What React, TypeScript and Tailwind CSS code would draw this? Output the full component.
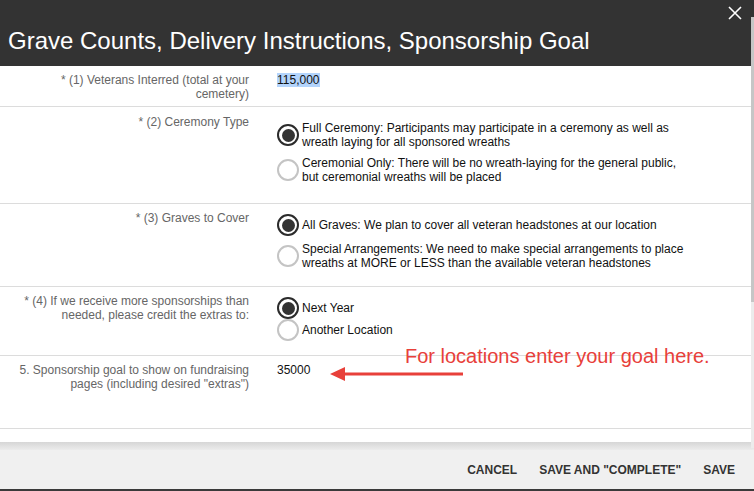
import React from "react";

type Option = { label: string[]; checked: boolean };

type Row = {
  label: string[];
  kind: "text" | "radio";
  value?: string;
  highlight?: boolean;
  options?: Option[];
  rowClass: string;
  optClass?: string;
};

const ROWS: Row[] = [
  {
    label: ["* (1) Veterans Interred (total at your", "cemetery)"],
    kind: "text",
    value: "115,000",
    highlight: true,
    rowClass: "h-[41px] pt-[7px]",
  },
  {
    label: ["* (2) Ceremony Type"],
    kind: "radio",
    rowClass: "h-[97px] pt-[8px]",
    optClass: "pt-[6px] gap-[7px]",
    options: [
      {
        label: [
          "Full Ceremony: Participants may participate in a ceremony as well as",
          "wreath laying for all sponsored wreaths",
        ],
        checked: true,
      },
      {
        label: [
          "Ceremonial Only: There will be no wreath-laying for the general public,",
          "but ceremonial wreaths will be placed",
        ],
        checked: false,
      },
    ],
  },
  {
    label: ["* (3) Graves to Cover"],
    kind: "radio",
    rowClass: "h-[83px] pt-[7px]",
    optClass: "pt-[3px] gap-[6px]",
    options: [
      {
        label: ["All Graves: We plan to cover all veteran headstones at our location"],
        checked: true,
      },
      {
        label: [
          "Special Arrangements: We need to make special arrangements to place",
          "wreaths at MORE or LESS than the available veteran headstones",
        ],
        checked: false,
      },
    ],
  },
  {
    label: ["* (4) If we receive more sponsorships than", "needed, please credit the extras to:"],
    kind: "radio",
    rowClass: "h-[69px] pt-[7px]",
    optClass: "pt-[3px] gap-0",
    options: [
      { label: ["Next Year"], checked: true },
      { label: ["Another Location"], checked: false },
    ],
  },
  {
    label: ["5. Sponsorship goal to show on fundraising", 'pages (including desired "extras")'],
    kind: "text",
    value: "35000",
    rowClass: "h-[73px] pt-[7px]",
  },
];

function Radio({ checked }: { checked: boolean }) {
  if (checked) {
    return (
      <span className="flex h-[22px] w-[22px] shrink-0 items-center justify-center rounded-full border-[2.5px] border-[#2b2b2b] bg-white">
        <span className="h-[13px] w-[13px] rounded-full bg-[#333]" />
      </span>
    );
  }
  return <span className="h-[22px] w-[22px] shrink-0 rounded-full border-2 border-[#c4c4c4] bg-white" />;
}

export default function App() {
  return (
    <div className="relative flex h-[491px] w-[754px] flex-col overflow-hidden bg-white font-['Liberation_Sans',Arial,sans-serif]">
      <div className="relative h-[66px] shrink-0 bg-[#333]">
        <h1 className="pl-[8px] pt-[27px] text-[24px] leading-[28px] text-white">
          Grave Counts, Delivery Instructions, Sponsorship Goal
        </h1>
        <button className="absolute right-[12px] top-[2px] text-white">
          <svg width="14" height="14" viewBox="0 0 14 14" className="mt-[4px]">
            <path d="M1 1L13 13M13 1L1 13" stroke="white" strokeWidth="1.6" />
          </svg>
        </button>
      </div>

      <div className="flex-1 overflow-hidden">
        {ROWS.map((row, i) => (
          <div
            key={i}
            className={`grid grid-cols-[249px_1fr] gap-x-[28px] border-b border-[#dcdcdc] ${row.rowClass}`}
          >
            <div className="text-right text-[12px] leading-[14px] text-[#666]">
              {row.label.map((l) => (
                <div key={l}>{l}</div>
              ))}
            </div>
            {row.kind === "text" ? (
              <div className="text-[12px] leading-[14px] text-[#111]">
                <span className={row.highlight ? "bg-[#b3d4fc]" : ""}>{row.value}</span>
              </div>
            ) : (
              <div className={`flex flex-col ${row.optClass}`}>
                {row.options!.map((opt) => (
                  <div key={opt.label[0]} className="flex items-center gap-[3px]">
                    <Radio checked={opt.checked} />
                    <div className="text-[12px] leading-[14px] text-[#111]">
                      {opt.label.map((l) => (
                        <div key={l}>{l}</div>
                      ))}
                    </div>
                  </div>
                ))}
              </div>
            )}
          </div>
        ))}
      </div>

      <div className="h-[8px] shrink-0 bg-gradient-to-b from-[#d6d6d6] to-[#ececec]" />
      <div className="flex h-[39px] shrink-0 items-center justify-end gap-[22px] bg-[#f0f0f0] pr-[19px] text-[12px] font-bold text-[#333]">
        <span>CANCEL</span>
        <span>SAVE AND "COMPLETE"</span>
        <span>SAVE</span>
      </div>
      <div className="h-[2px] shrink-0 bg-[#3a3a3a]" />

      {/* scrollbar */}
      <div className="absolute right-0 top-[17px] flex h-[431px] w-[3px] flex-col bg-[#ececec]">
        <div className="h-[285px] bg-[#c6c6c6]" />
      </div>

      {/* annotation */}
      <div className="absolute left-[405px] top-[344px] text-[20px] leading-[24px] text-[#e8403a]">
        For locations enter your goal here.
      </div>
      <svg className="absolute left-[328px] top-[365px]" width="140" height="18" viewBox="0 0 140 18">
        <path d="M14 9H135" stroke="#e8403a" strokeWidth="3" />
        <path d="M2 9L17 2V16Z" fill="#e8403a" />
      </svg>
    </div>
  );
}
